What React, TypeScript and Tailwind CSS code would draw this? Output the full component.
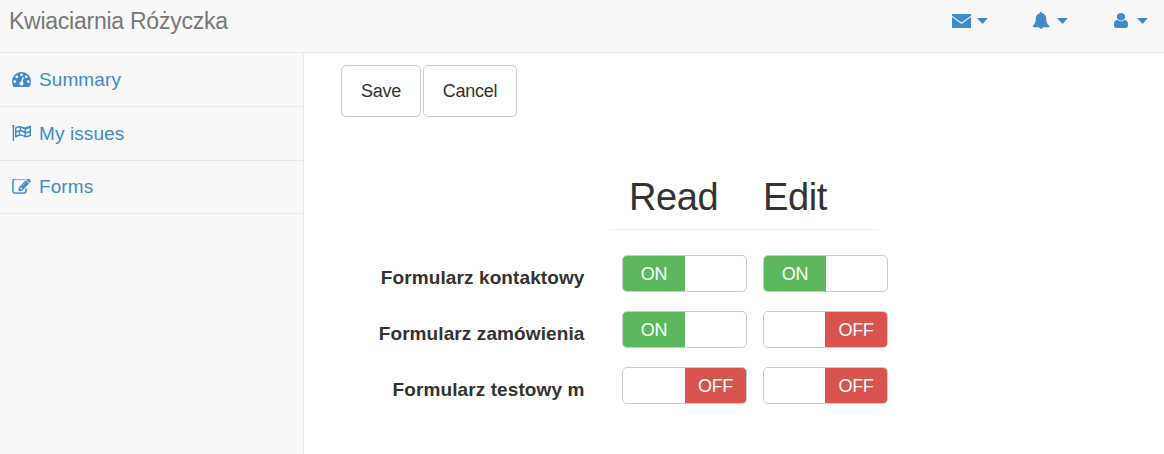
import React from "react";

type IconProps = { d: string; box?: string; className: string };
const Icon = ({ d, box = "0 0 1792 1792", className }: IconProps) => (
  <svg viewBox={box} fill="currentColor" preserveAspectRatio="none" className={`block shrink-0 ${className}`} aria-hidden="true">
    <path d={d} fillRule="evenodd" />
  </svg>
);

const gauge =
  "M384 1152q0-53-37.5-90.5t-90.5-37.5-90.5 37.5-37.5 90.5 37.5 90.5 90.5 37.5 90.5-37.5 37.5-90.5zm192-448q0-53-37.5-90.5t-90.5-37.5-90.5 37.5-37.5 90.5 37.5 90.5 90.5 37.5 90.5-37.5 37.5-90.5zm428 481l101-382q6-26-7.5-48.5t-38.5-29.5-48 6.5-30 39.5l-101 382q-60 5-107 43.5t-63 98.5q-20 77 20 146t117 89 146-20 89-117q16-60-6-117t-72-91zm660-33q0-53-37.5-90.5t-90.5-37.5-90.5 37.5-37.5 90.5 37.5 90.5 90.5 37.5 90.5-37.5 37.5-90.5zm-640-640q0-53-37.5-90.5t-90.5-37.5-90.5 37.5-37.5 90.5 37.5 90.5 90.5 37.5 90.5-37.5 37.5-90.5zm448 192q0-53-37.5-90.5t-90.5-37.5-90.5 37.5-37.5 90.5 37.5 90.5 90.5 37.5 90.5-37.5 37.5-90.5zm320 448q0 261-141 483-19 29-54 29h-1402q-35 0-54-29-141-221-141-483 0-182 71-348t191-286 286-191 348-71 348 71 286 191 191 286 71 348z";
const pencil =
  "M888 1184l116-116-152-152-116 116v56h96v96h56zm440-720q-16-16-33 1l-350 350q-17 17-1 33t33-1l350-350q17-17 1-33zm80 594v190q0 119-84.5 203.5t-203.5 84.5h-832q-119 0-203.5-84.5t-84.5-203.5v-832q0-119 84.5-203.5t203.5-84.5h832q63 0 117 25 15 7 18 23 3 17-9 29l-49 49q-14 14-32 8-23-6-45-6h-832q-66 0-113 47t-47 113v832q0 66 47 113t113 47h832q66 0 113-47t47-113v-126q0-13 9-22l64-64q15-15 35-7t20 29zm-96-738l288 288-672 672h-288v-288zm444 132l-92 92-288-288 92-92q28-28 68-28t68 28l152 152q28 28 28 68t-28 68z";
const flag =
  "M.2.9a1.2 1.2 0 0 1 2.4 0q0 .6-.5.9V16H.7V1.8Q.2 1.5.2.9zM3 2.6C5 1.300 7 .6 9 1.300Q12 3 14 2L18 .7Q19 .6 19 1.500V10.700Q15.500 13 12.500 12.200Q10 10.400 7.500 10.900Q5 11.600 3.500 12.700Q2.900 12.700 3 11.700zM4.400 3.500V6.100Q6 5.100 7.700 4.900V2.500Q6 2.600 4.400 3.500zM9.200 3V4.900Q11 5.300 12.500 6.200V4.300Q11 3.700 9.200 3zM14 4.400V6.800Q16 6.700 17.600 5.700V2.900Q16 3.900 14 4.400zM7.900 6.400V8.900L12.500 10.400V8.100Q10 6.600 7.900 6.400zM4.400 7.700V10.300Q5.500 9.700 6.700 9.400V6.800zM14 8.500V10.800Q16 10.800 17.600 9.700V7.500Q16 8.400 14 8.500z";
const envelope = "M0 0H19V1.700L9.500 8.500L0 1.700zM0 3L9.500 10.100L19 3V14H0z";
const bell =
  "M9 0Q10.200 0 10.200 1.200Q14.200 2 14.200 6.500Q14.200 11.800 17.500 14.200Q17.300 15.200 16 15.200H11A2.100 2.300 0 0 1 7 15.200H2Q.7 15.200.5 14.200Q3.800 11.800 3.800 6.500Q3.800 2 7.800 1.200Q7.800 0 9 0z";
const user =
  "M1536 1399q0 109-62.5 187t-150.500 78h-854q-88 0-150.500-78t-62.500-187q0-85 8.500-160.500t31.500-152 58.500-131 94-89 134.500-34.500q131 128 313 128t313-128q76 0 134.500 34.500t94 89 58.500 131 31.500 152 8.500 160.500zm-256-887q0 159-112.500 271.500t-271.500 112.500-271.500-112.500-112.500-271.500 112.500-271.500 271.500-112.500 271.500 112.500 112.500 271.500z";

const Caret = () => <Icon box="0 0 11 6" d="M0 0H11L5.500 6z" className="h-[6px] w-[11px]" />;

function Toggle({ on, offClass }: { on: boolean; offClass: string }) {
  return (
    <button
      role="switch"
      aria-checked={on}
      className="flex h-[37px] w-[125px] overflow-hidden rounded-[5px] border border-[#ccc] bg-white text-[18px] leading-[37px] tracking-[-0.3px] text-white"
    >
      {on ? (
        <span className="w-[62px] bg-[#5cb85c] text-center">ON</span>
      ) : (
        <span className={`ml-auto bg-[#d9534f] text-center ${offClass}`}>OFF</span>
      )}
    </button>
  );
}

const rows = [
  { name: "Formularz kontaktowy", read: true, edit: true },
  { name: "Formularz zamówienia", read: true, edit: false },
  { name: "Formularz testowy m", read: false, edit: false },
];

export default function App() {
  return (
    <div className="flex h-[454px] w-[1164px] flex-col overflow-hidden bg-white font-['Liberation_Sans',Arial,sans-serif] text-[#333]">
      <header className="flex h-[53px] shrink-0 justify-between border-b border-[#e7e7e7] bg-[#f8f8f8]">
        <h1 className="pt-[6px] pl-[9px] text-[23px] leading-[30px] tracking-[-0.25px] text-[#777]">Kwiaciarnia Różyczka</h1>
        <nav className="flex h-[42px] items-center pr-[16px] text-[#428bca]">
          <button className="flex w-[80px] items-center gap-[6px]">
            <Icon box="0 0 19 14" d={envelope} className="h-[14px] w-[19px]" />
            <Caret />
          </button>
          <button className="flex w-[82px] items-center gap-[7px]">
            <Icon box="0 0 18 18" d={bell} className="h-[18px] w-[18px]" />
            <Caret />
          </button>
          <button className="flex items-center gap-[9px]">
            <Icon box="256 128 1280 1536" d={user} className="mb-px h-[15px] w-[14px]" />
            <Caret />
          </button>
        </nav>
      </header>
      <div className="flex grow">
        <aside className="w-[304px] shrink-0 border-r border-[#e7e7e7] bg-[#f8f8f8] text-[19px] text-[#428bca]">
          <a className="flex h-[54px] items-center gap-[8px] border-b border-[#e7e7e7] pt-px pl-[12px]">
            <Icon box="0 256 1792 1408" d={gauge} className="mb-px h-[15px] w-[19px]" />
            <span className="tracking-[0.1px]">Summary</span>
          </a>
          <a className="flex h-[54px] items-center gap-[8px] border-b border-[#e7e7e7] pt-px pl-[12px]">
            <Icon box="0 0 19 16" d={flag} className="mb-[3px] h-[16px] w-[19px]" />
            <span className="tracking-[0.1px]">My issues</span>
          </a>
          <a className="flex h-[53px] items-center gap-[8px] border-b border-[#e7e7e7] pl-[12px]">
            <Icon box="-20 200 1832 1350" d={pencil} className="mb-[2px] h-[15px] w-[19px] stroke-current stroke-[30]" />
            <span className="tracking-[0.1px]">Forms</span>
          </a>
        </aside>
        <main className="pt-[12px] pl-[37px]">
          <div className="flex gap-[2px] text-[18px] tracking-[-0.25px]">
            <button className="h-[52px] w-[80px] rounded-[5px] border border-[#ccc]">Save</button>
            <button className="h-[52px] w-[94px] rounded-[5px] border border-[#ccc]">Cancel</button>
          </div>
          <div className="mt-[54px] ml-[269px] flex h-[59px] w-[268px] border-b border-[#eee] pl-[19px] text-[38px] leading-[52px] tracking-[-0.4px]">
            <h2 className="w-[134px]">Read</h2>
            <h2>Edit</h2>
          </div>
          <div className="mt-[25px] flex flex-col gap-[19px]">
            {rows.map((row) => (
              <div key={row.name} className="flex h-[37px] gap-[16px]">
                <span className="mr-[21px] w-[244px] pt-[9px] pr-[0.5px] text-right text-[19px] leading-[28px] font-bold tracking-[0.1px]">{row.name}</span>
                <Toggle on={row.read} offClass="w-[61px]" />
                <Toggle on={row.edit} offClass="w-[62px]" />
              </div>
            ))}
          </div>
        </main>
      </div>
    </div>
  );
}
